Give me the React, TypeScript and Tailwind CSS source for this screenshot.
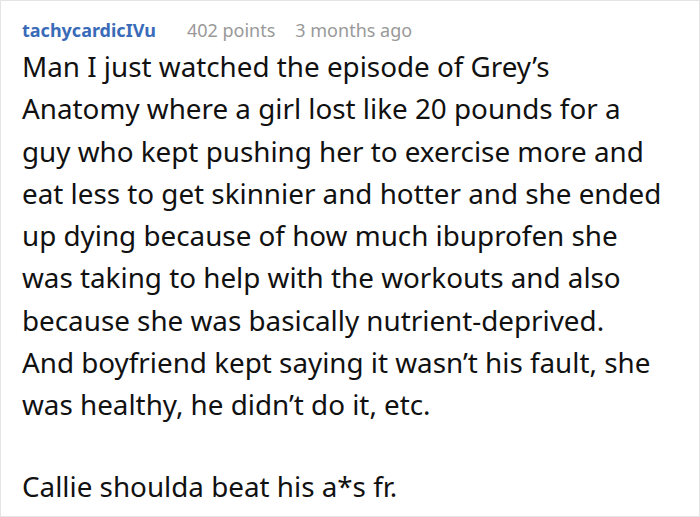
export default function App() {
  return (
    <div className="w-[700px] h-[517px] bg-white border border-[#e4e4e4] box-border overflow-hidden font-['Noto_Sans',sans-serif]">
      <div className="pl-[21px] w-[668px] pt-[16px]">
        <div className="flex items-baseline text-[18px] leading-[26px]">
          <span className="font-bold text-[#3a6bb8]">tachycardicIVu</span>
          <span className="ml-[31px] text-[#999999]">402 points</span>
          <span className="ml-[20px] text-[#999999]">3 months ago</span>
        </div>
        <div className="mt-[2px] text-[27.8px] leading-[42.25px] text-[#111111]">
          <p>
            Man I just watched the episode of Grey’s Anatomy where a girl lost like 20 pounds for a guy who kept pushing her to exercise more and eat less to get skinnier and hotter and she ended up dying because of how much ibuprofen she was taking to help with the workouts and also because she was basically nutrient-deprived.
            <br />
            And boyfriend kept saying it wasn’t his fault, she was healthy, he didn’t do it, etc.
          </p>
          <p className="mt-[40px]">Callie shoulda beat his a*s fr.</p>
        </div>
      </div>
    </div>
  );
}
